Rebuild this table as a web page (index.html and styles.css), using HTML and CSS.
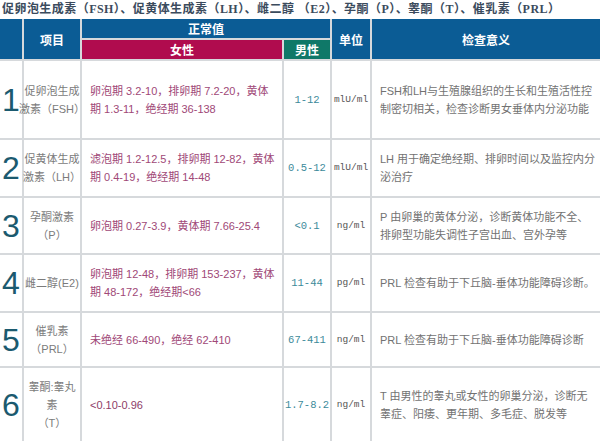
FILE: index.html
```html
<!DOCTYPE html>
<html lang="zh-CN">
<head>
<meta charset="utf-8">
<title>激素检查</title>
<link rel="stylesheet" href="styles.css">
</head>
<body>
<div class="title">促卵泡生成素（FSH）、促黄体生成素（LH）、雌二醇 （E2）、孕酮（P）、睾酮（T）、催乳素（PRL）</div>
<div class="tbl">
  <div class="h h-idx"></div>
  <div class="h h-item">项目</div>
  <div class="h h-norm">正常值</div>
  <div class="h h-unit">单位</div>
  <div class="h h-mean">检查意义</div>
  <div class="h h-f">女性</div>
  <div class="h h-m">男性</div>

  <div class="c idx">1</div>
  <div class="c item">促卵泡生成<br>激素（FSH）</div>
  <div class="c fem">卵泡期 3.2-10，排卵期 7.2-20，黄体<br>期 1.3-11，绝经期 36-138</div>
  <div class="c male">1-12</div>
  <div class="c unit">mlU/ml</div>
  <div class="c mean">FSH和LH与生殖腺组织的生长和生殖活性控<br>制密切相关，检查诊断男女垂体内分泌功能</div>

  <div class="c idx">2</div>
  <div class="c item">促黄体生成<br>激素（LH）</div>
  <div class="c fem">滤泡期 1.2-12.5，排卵期 12-82，黄体<br>期 0.4-19，绝经期 14-48</div>
  <div class="c male">0.5-12</div>
  <div class="c unit">mlU/ml</div>
  <div class="c mean">LH 用于确定绝经期、排卵时间以及监控内分<br>泌治疗</div>

  <div class="c idx">3</div>
  <div class="c item">孕酮激素<br>（P）</div>
  <div class="c fem">卵泡期 0.27-3.9，黄体期 7.66-25.4</div>
  <div class="c male">&lt;0.1</div>
  <div class="c unit">ng/ml</div>
  <div class="c mean">P 由卵巢的黄体分泌，诊断黄体功能不全、<br>排卵型功能失调性子宫出血、宫外孕等</div>

  <div class="c idx">4</div>
  <div class="c item">雌二醇(E2)</div>
  <div class="c fem">卵泡期 12-48，排卵期 153-237，黄体<br>期 48-172，绝经期&lt;66</div>
  <div class="c male">11-44</div>
  <div class="c unit">pg/ml</div>
  <div class="c mean">PRL 检查有助于下丘脑-垂体功能障碍诊断。</div>

  <div class="c idx">5</div>
  <div class="c item">催乳素<br>（PRL）</div>
  <div class="c fem">未绝经 66-490，绝经 62-410</div>
  <div class="c male">67-411</div>
  <div class="c unit">ng/ml</div>
  <div class="c mean">PRL 检查有助于下丘脑-垂体功能障碍诊断</div>

  <div class="c idx">6</div>
  <div class="c item">睾酮:睾丸<br>素<br>（T）</div>
  <div class="c fem fem-t">&lt;0.10-0.96</div>
  <div class="c male">1.7-8.2</div>
  <div class="c unit">ng/ml</div>
  <div class="c mean">T 由男性的睾丸或女性的卵巢分泌，诊断无<br>睾症、阳痿、更年期、多毛症、脱发等</div>
</div>
</body>
</html>
```

FILE: styles.css
```css
html, body {
  margin: 0;
  padding: 0;
  background: #ffffff;
}
body {
  width: 600px;
  height: 443px;
  overflow: hidden;
  font-family: "Liberation Sans", "Noto Sans CJK SC", sans-serif;
}
.title {
  height: 19px;
  line-height: 19px;
  padding-left: 2px;
  font-family: "Liberation Serif", "Noto Sans CJK SC", serif;
  font-size: 12px;
  font-weight: bold;
  letter-spacing: 0.45px;
  color: #3b4b5d;
  white-space: nowrap;
}
.tbl {
  display: grid;
  grid-template-columns: 22px 56px 200px 46px 38px 228px;
  grid-template-rows: 19px 19px 77px 56px 55px 56px 53px 73px;
  gap: 2px;
  background: #d6d9dc;
}
.h {
  display: flex;
  align-items: center;
  justify-content: center;
  color: #ffffff;
  font-weight: bold;
  font-size: 12px;
  background: #0b5c95;
}
.h-idx { grid-column: 1; grid-row: 1 / 3; }
.h-item { grid-column: 2; grid-row: 1 / 3; }
.h-norm { grid-column: 3 / 5; grid-row: 1; }
.h-unit { grid-column: 5; grid-row: 1 / 3; }
.h-mean { grid-column: 6; grid-row: 1 / 3; }
.h-f { grid-column: 3; grid-row: 2; background: #b00c4e; }
.h-m { grid-column: 4; grid-row: 2; background: #0f7868; }

.c {
  background: #ffffff;
  display: flex;
  align-items: center;
  font-size: 11px;
  line-height: 18px;
  white-space: nowrap;
}
.idx {
  justify-content: center;
  font-size: 32px;
  line-height: 1;
  color: #1b5a6f;
}
.item {
  justify-content: center;
  text-align: center;
  color: #7b7b7b;
}
.fem {
  padding-left: 8px;
  color: #a04877;
}
.fem-t {
  color: #8e3c68;
}
.male {
  justify-content: center;
  font-family: "Liberation Mono", "Noto Sans CJK SC", monospace;
  font-size: 10.5px;
  color: #3c8a9a;
}
.unit {
  justify-content: center;
  font-family: "Liberation Mono", "Noto Sans CJK SC", monospace;
  font-size: 9.5px;
  color: #555555;
}
.mean {
  padding-left: 8px;
  color: #727272;
}
```
